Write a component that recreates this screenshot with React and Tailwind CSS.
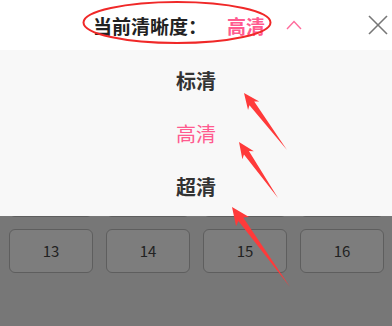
import React from "react";

const font = { fontFamily: '"Noto Sans CJK SC", "Noto Sans", sans-serif' };

function Arrow({ x, y, tx, ty, head = 17, hw = 7.5 }) {
  const dx = tx - x;
  const dy = ty - y;
  const L = Math.sqrt(dx * dx + dy * dy);
  const ang = (Math.atan2(dy, dx) * 180) / Math.PI;
  const pts = `0,0 ${head},${-hw} ${head - 3},-3 ${L},0 ${head - 3},3 ${head},${hw}`;
  return <polygon points={pts} fill="#ff3a3a" transform={`translate(${x} ${y}) rotate(${ang})`} />;
}

export default function App() {
  const nums = Array.from({ length: 16 }, (_, i) => i + 1);
  return (
    <div className="relative w-[392px] h-[326px] overflow-hidden bg-[#777777]" style={font}>
      {/* header */}
      <div className="h-[50px] bg-white flex items-center pl-[93px]">
        <span className="text-[19px] font-bold text-[#222222] leading-none">当前清晰度：</span>
        <span className="ml-[20px] text-[19px] font-bold text-[#ff5a8f] leading-none">高清</span>
        <svg className="ml-[21px]" width="16" height="12" viewBox="0 0 16 12">
          <polyline points="1,10 8,2.5 15,10" fill="none" stroke="#ff6c9c" strokeWidth="1.4" />
        </svg>
        <svg className="ml-[66px]" width="20" height="20" viewBox="0 0 20 20">
          <line x1="1" y1="1" x2="19" y2="19" stroke="#777777" strokeWidth="1.6" />
          <line x1="19" y1="1" x2="1" y2="19" stroke="#777777" strokeWidth="1.6" />
        </svg>
      </div>

      {/* episode grid */}
      <div className="grid grid-cols-4 gap-x-[13px] gap-y-[12px] pl-[9px] pr-[8px] pt-[11px]">
        {nums.map((n) => (
          <div
            key={n}
            className="h-[44px] rounded-[6px] border border-[#5e5e5e] bg-[#7d7d7d] flex items-center justify-center text-[15px] text-[#222222]"
          >
            {n}
          </div>
        ))}
      </div>

      {/* dropdown panel */}
      <div className="absolute top-[50px] left-0 right-0 h-[166px] bg-[#f8f8f8] flex flex-col items-center pt-[4px]">
        <div className="h-[53px] flex items-center text-[20px] font-bold text-[#333333]">标清</div>
        <div className="h-[53px] flex items-center text-[20px] text-[#ff5a8f]">高清</div>
        <div className="h-[53px] flex items-center text-[20px] font-bold text-[#333333]">超清</div>
      </div>

      {/* annotations */}
      <svg className="absolute inset-0 pointer-events-none" width="392" height="326" viewBox="0 0 392 326">
        <ellipse cx="177" cy="22.5" rx="93.5" ry="20.5" fill="none" stroke="#f02828" strokeWidth="2" />
        <Arrow x={244} y={93} tx={287} ty={150} head={16} hw={7} />
        <Arrow x={239} y={142} tx={278} ty={198} head={16} hw={7} />
        <Arrow x={232} y={207} tx={290} ty={287} head={18} hw={8} />
      </svg>
    </div>
  );
}
